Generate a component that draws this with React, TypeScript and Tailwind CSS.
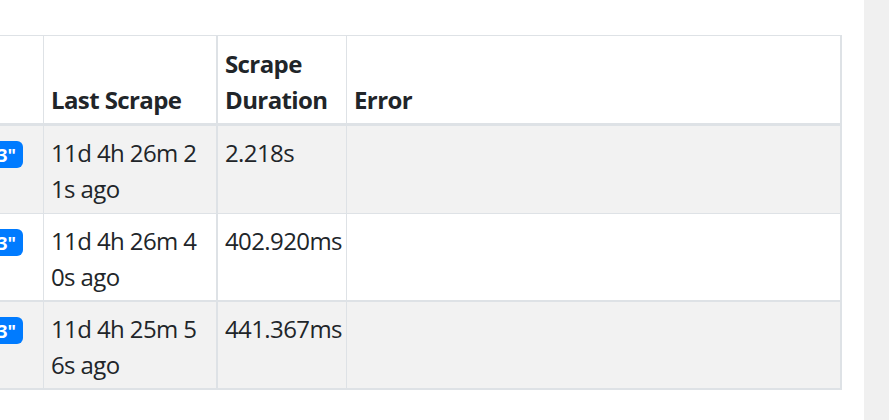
import React from 'react';

const rows = [
  { last: ['11d 4h 26m 2', '1s ago'], duration: '2.218s', striped: true, rowClass: 'pt-[9px] pb-[6px] border-b' },
  { last: ['11d 4h 26m 4', '0s ago'], duration: '402.920ms', striped: false, rowClass: 'pt-[9px] pb-[5px] border-b-2' },
  { last: ['11d 4h 25m 5', '6s ago'], duration: '441.367ms', striped: true, rowClass: 'pt-[9px] pb-[5px] border-b-2' },
];

const App = () => {
  return (
    <div
      className="flex h-[420px] w-[889px] overflow-hidden bg-white text-[24px] leading-[36px] tracking-[-0.6px] text-[#212529]"
      style={{ fontFamily: '"Segoe UI", "Open Sans", "Noto Sans", sans-serif' }}
    >
      <div className="w-[864px] overflow-hidden pt-[35px]">
        {/* Targets table, first column scrolled off to the left */}
        <table className="ml-[-200px] w-[1042px] table-fixed border-separate border-spacing-0">
          <colgroup>
            <col className="w-[244px]" />
            <col className="w-[174px]" />
            <col className="w-[129px]" />
            <col className="w-[495px]" />
          </colgroup>
          <thead>
            <tr>
              <th className="border-t border-r border-b-[3px] border-[#dee2e6] px-[7px] pt-[10px] pb-[5px] text-left align-bottom font-bold"></th>
              <th className="border-t border-r-2 border-b-[3px] border-[#dee2e6] px-[7px] pt-[10px] pb-[5px] text-left align-bottom font-bold">
                Last Scrape
              </th>
              <th className="border-t border-r border-b-[3px] border-[#dee2e6] px-[7px] pt-[10px] pb-[5px] text-left align-bottom font-bold">
                Scrape Duration
              </th>
              <th className="border-t border-r-2 border-b-[3px] border-[#dee2e6] px-[7px] pt-[10px] pb-[5px] text-left align-bottom font-bold">
                Error
              </th>
            </tr>
          </thead>
          <tbody>
            {rows.map((row, i) => (
              <tr key={i} className={row.striped ? 'bg-[#f2f2f2]' : 'bg-white'}>
                <td className={`border-r border-[#dee2e6] px-[7px] align-top ${row.rowClass}`}>
                  <div className="flex justify-end">
                    <span className="mt-[6px] mr-[13px] whitespace-nowrap rounded-[6px] bg-[#007bff] px-[7px] py-[4.5px] text-[18px] font-bold leading-[18px] tracking-normal text-white">
                      instance="localhost:9093"
                    </span>
                  </div>
                </td>
                <td className={`border-r-2 border-[#dee2e6] px-[7px] align-top ${row.rowClass}`}>
                  {row.last[0]}
                  <br />
                  {row.last[1]}
                </td>
                <td className={`border-r border-[#dee2e6] px-[7px] align-top ${row.rowClass}`}>{row.duration}</td>
                <td className={`border-r-2 border-[#dee2e6] px-[7px] align-top ${row.rowClass}`}></td>
              </tr>
            ))}
          </tbody>
        </table>
      </div>
      <div className="h-full w-[25px] bg-[#f0f0f0]" />
    </div>
  );
};

export default App;
